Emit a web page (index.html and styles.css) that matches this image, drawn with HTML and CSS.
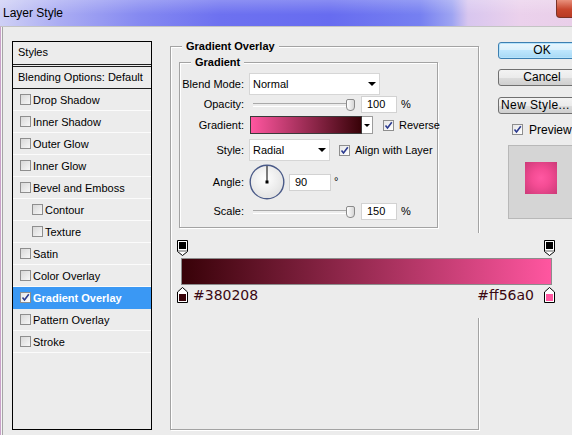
FILE: index.html
```html
<!DOCTYPE html>
<html lang="en">
<head>
    <meta charset="UTF-8">
    <title>Layer Style</title>
    <link rel="stylesheet" href="styles.css">
</head>
<body>
<div class="window">
    <div class="titlebar">
        <span class="title">Layer Style</span>
        <span class="close"></span>
    </div>
    <div class="body">
        <!-- effects list -->
        <div class="styles">
            <div class="styles-head">Styles</div>
            <div class="styles-blend">Blending Options: Default</div>
            <div class="style-row"><span class="check"></span>Drop Shadow</div>
            <div class="style-row"><span class="check"></span>Inner Shadow</div>
            <div class="style-row"><span class="check"></span>Outer Glow</div>
            <div class="style-row"><span class="check"></span>Inner Glow</div>
            <div class="style-row"><span class="check"></span>Bevel and Emboss</div>
            <div class="style-row sub"><span class="check"></span>Contour</div>
            <div class="style-row sub"><span class="check"></span>Texture</div>
            <div class="style-row"><span class="check"></span>Satin</div>
            <div class="style-row"><span class="check"></span>Color Overlay</div>
            <div class="style-row active"><span class="check on"><svg width="9" height="9" viewBox="0 0 9 9"><path d="M1.5 4.5L3.5 7L7.8 1.2" fill="none" stroke="#2b3a8f" stroke-width="1.6"/></svg></span>Gradient Overlay</div>
            <div class="style-row"><span class="check"></span>Pattern Overlay</div>
            <div class="style-row"><span class="check"></span>Stroke</div>
        </div>

        <div class="main">
            <div class="group outer">
                <div class="group-title">Gradient Overlay</div>
                <div class="group inner">
                    <div class="group-title">Gradient</div>

                    <div class="row r-blend">
                        <span class="lbl">Blend Mode:</span>
                        <div class="select wide">Normal<span class="arrow"></span></div>
                    </div>
                    <div class="row r-opacity">
                        <span class="lbl">Opacity:</span>
                        <div class="slider"><span class="thumb"></span></div>
                        <div class="num">100</div>
                        <span class="unit">%</span>
                    </div>
                    <div class="row r-grad">
                        <span class="lbl">Gradient:</span>
                        <div class="swatch"></div>
                        <div class="swatch-btn"><span class="arrow"></span></div>
                        <span class="check on gap"><svg width="9" height="9" viewBox="0 0 9 9"><path d="M1.5 4.5L3.5 7L7.8 1.2" fill="none" stroke="#2b3a8f" stroke-width="1.6"/></svg></span>
                        <span class="opt">Reverse</span>
                    </div>
                    <div class="row r-style">
                        <span class="lbl">Style:</span>
                        <div class="select narrow">Radial<span class="arrow"></span></div>
                        <span class="check on gap2"><svg width="9" height="9" viewBox="0 0 9 9"><path d="M1.5 4.5L3.5 7L7.8 1.2" fill="none" stroke="#2b3a8f" stroke-width="1.6"/></svg></span>
                        <span class="opt">Align with Layer</span>
                    </div>
                    <div class="row r-angle">
                        <span class="lbl">Angle:</span>
                        <svg class="dial" width="36" height="36" viewBox="0 0 36 36">
                            <defs>
                                <radialGradient id="dialFill" cx="45%" cy="40%" r="60%">
                                    <stop offset="0" stop-color="#ffffff"/>
                                    <stop offset="1" stop-color="#e2e2e2"/>
                                </radialGradient>
                            </defs>
                            <circle cx="18" cy="18" r="16.8" fill="url(#dialFill)" stroke="#4a5a88" stroke-width="1.4"/>
                            <line x1="18" y1="18" x2="18" y2="2" stroke="#000" stroke-width="1"/>
                            <rect x="16.5" y="16.5" width="3" height="3" fill="#000"/>
                        </svg>
                        <div class="num angle">90</div>
                        <span class="deg">°</span>
                    </div>
                    <div class="row r-scale">
                        <span class="lbl">Scale:</span>
                        <div class="slider"><span class="thumb"></span></div>
                        <div class="num">150</div>
                        <span class="unit">%</span>
                    </div>
                </div>

                <!-- gradient editor strip -->
                <div class="editor">
                    <div class="stop-row">
                        <svg width="11" height="16" viewBox="0 0 11 16"><path d="M0.5 0.5H10.5V11.5L5.5 15.5L0.5 11.5Z" fill="#fff" stroke="#000"/><rect x="2" y="2" width="7" height="7" fill="#000"/><rect x="1" y="10" width="9" height="2" fill="#b0b0b0"/></svg>
                        <svg width="11" height="16" viewBox="0 0 11 16"><path d="M0.5 0.5H10.5V11.5L5.5 15.5L0.5 11.5Z" fill="#fff" stroke="#000"/><rect x="2" y="2" width="7" height="7" fill="#000"/><rect x="1" y="10" width="9" height="2" fill="#b0b0b0"/></svg>
                    </div>
                    <div class="bar"></div>
                    <div class="stop-row bottom">
                        <svg width="11" height="16" viewBox="0 0 11 16"><path d="M5.5 0.5L10.5 5V15.5H0.5V5Z" fill="#fff" stroke="#000"/><rect x="2" y="7" width="7" height="7" fill="#380208"/></svg>
                        <span class="hex">#380208</span>
                        <span class="hex right">#ff56a0</span>
                        <svg width="11" height="16" viewBox="0 0 11 16"><path d="M5.5 0.5L10.5 5V15.5H0.5V5Z" fill="#fff" stroke="#000"/><rect x="2" y="7" width="7" height="7" fill="#ff56a0"/></svg>
                    </div>
                </div>
            </div>
        </div>

        <div class="side">
            <div class="btn default">OK</div>
            <div class="btn">Cancel</div>
            <div class="btn newstyle">New Style...</div>
            <div class="preview-row">
                <span class="check on"><svg width="9" height="9" viewBox="0 0 9 9"><path d="M1.5 4.5L3.5 7L7.8 1.2" fill="none" stroke="#2b3a8f" stroke-width="1.6"/></svg></span>
                <span class="opt">Preview</span>
            </div>
            <div class="preview">
                <div class="preview-swatch"></div>
            </div>
        </div>
    </div>
</div>
</body>
</html>
```

FILE: styles.css
```css
* {
    box-sizing: border-box;
}

body {
    margin: 0;
    background-color: #ececec;
    font-family: "Liberation Sans", Arial, sans-serif;
    font-size: 11px;
    color: #000;
}

.window {
    width: 572px;
    height: 435px;
    overflow: hidden;
}

.titlebar {
    display: flex;
    align-items: center;
    height: 26px;
    padding-left: 3px;
    font-size: 12px;
    background:
        linear-gradient(to bottom, rgba(255, 255, 255, 0.22), rgba(255, 255, 255, 0) 55%),
        linear-gradient(to right, #cfd0f5 0, #aaacf3 60px, #8589f1 140px, #6d71f0 220px, #676cf0 330px, #7680f1 420px, #9ea4f2 452px, #d8c6ef 468px, #ebd1ec 520px, #e9cfe9 572px);
}

.close {
    align-self: flex-start;
    margin-left: auto;
    margin-right: -16px;
    width: 32px;
    height: 18px;
    border: 1px solid #7a3228;
    border-top: none;
    border-radius: 0 0 0 4px;
    background: linear-gradient(to bottom, #e8907c, #c8462e 55%, #b83a24);
}

.body {
    display: flex;
    align-items: flex-start;
    height: 409px;
    border-top: 1px solid #c4c4c4;
    border-left: 1px solid #c9a1c9;
    padding: 14px 0 0 11px;
    box-shadow: inset 1px 0 0 #f6f6f6, inset 2px 0 0 #a6a6a6;
}

/* effects list */
.styles {
    flex-shrink: 0;
    width: 140px;
    height: 389px;
    border: 1px solid #000;
}

.styles-head {
    height: 25px;
    line-height: 21px;
    padding-left: 5px;
    border-bottom: 3px double #1e1e1e;
}

.styles-blend {
    height: 22px;
    line-height: 20px;
    padding-left: 5px;
    border-bottom: 1px solid #1e1e1e;
}

.style-row {
    display: flex;
    align-items: center;
    height: 22px;
    padding-left: 7px;
    border-bottom: 1px solid #fbfbfb;
}

.style-row.sub {
    padding-left: 19px;
}

.style-row.active {
    background-color: #3a98f4;
    color: #fff;
    font-weight: bold;
    border-bottom-color: #3a98f4;
}

.check {
    display: inline-flex;
    align-items: center;
    justify-content: center;
    flex-shrink: 0;
    width: 11px;
    height: 11px;
    margin-right: 2px;
    border: 1px solid #8e8e8e;
    background: linear-gradient(135deg, #d8d8d8, #f7f7f7);
}

.check.on {
    background: linear-gradient(135deg, #e6e6e6, #ffffff);
}

/* settings groups */
.main {
    margin: 5px 0 0 18px;
}

.group {
    position: relative;
    border: 1px solid #a3a3a3;
    box-shadow: 1px 1px 0 #fff, inset 1px 1px 0 #fff;
}

.outer {
    width: 309px;
    height: 384px;
}

.inner {
    width: 259px;
    height: 166px;
    margin: 15px 0 0 8px;
    padding-top: 10px;
}

.group-title {
    position: absolute;
    top: -7px;
    left: 11px;
    padding: 0 4px;
    line-height: 13px;
    font-weight: bold;
    background-color: #ececec;
}

.row {
    display: flex;
    align-items: center;
    height: 22px;
    white-space: nowrap;
}

.row > * {
    flex-shrink: 0;
}

.r-opacity,
.r-scale {
    height: 18px;
}

.r-grad {
    height: 18px;
    margin-top: 3px;
}

.r-style {
    margin-top: 5px;
}

.r-angle {
    height: 36px;
    margin-top: 3px;
}

.r-scale {
    margin-top: 2px;
}

.lbl {
    width: 64px;
    margin-right: 5px;
    text-align: right;
}

.select {
    display: flex;
    align-items: center;
    justify-content: space-between;
    height: 22px;
    padding: 0 3px 0 3px;
    border: 1px solid #d6d6d6;
    background-color: #fff;
}

.select.wide {
    width: 131px;
}

.select.narrow {
    width: 81px;
}

.arrow {
    width: 0;
    height: 0;
    border-left: 4px solid transparent;
    border-right: 4px solid transparent;
    border-top: 4px solid #000;
}

.slider {
    position: relative;
    width: 102px;
    height: 18px;
    margin-left: 4px;
}

.slider::before {
    content: "";
    position: absolute;
    left: 0;
    right: 4px;
    top: 8px;
    height: 2px;
    border-top: 1px solid #a9a9a9;
    border-bottom: 1px solid #fff;
}

.thumb {
    position: absolute;
    right: 0;
    top: 4px;
    width: 9px;
    height: 12px;
    border: 1px solid #8a8a8a;
    border-radius: 2px 2px 4px 4px;
    background: linear-gradient(to right, #ffffff, #d6d6d6);
}

.num {
    width: 36px;
    height: 17px;
    margin-left: 6px;
    padding-left: 5px;
    line-height: 15px;
    border: 1px solid #d2d2d2;
    background-color: #fff;
}

.num.angle {
    width: 42px;
    margin-left: 4px;
}

.unit {
    margin-left: 4px;
}

.deg {
    align-self: flex-start;
    margin: 11px 0 0 3px;
}

.swatch {
    width: 112px;
    height: 18px;
    margin-left: 1px;
    border: 1px solid #3a3a3a;
    background: linear-gradient(to right, #ff56a0, #380208);
}

.swatch-btn {
    display: flex;
    align-items: center;
    justify-content: center;
    width: 11px;
    height: 18px;
    border: 1px solid #9c9c9c;
    border-left: none;
    background-color: #fff;
}

.swatch-btn .arrow {
    border-left-width: 3px;
    border-right-width: 3px;
    border-top-width: 3px;
}

.check.gap {
    margin-left: 10px;
}

.check.gap2 {
    margin-left: 9px;
}

.opt {
    margin-left: 3px;
}

.dial {
    display: block;
}

/* gradient editor strip */
.editor {
    width: 385px;
    height: 85px;
    margin: 5px 0 0 4px;
    padding: 7px 0 0 2px;
    background-color: #ececec;
}

.stop-row {
    display: flex;
    justify-content: space-between;
    width: 378px;
    height: 16px;
}

.stop-row svg {
    display: block;
}

.bar {
    width: 371px;
    height: 27px;
    margin: 2px 0 0 4px;
    border: 1px solid #8c8c8c;
    background: linear-gradient(to right, #380208, #ff56a0);
}

.stop-row.bottom {
    align-items: center;
    justify-content: flex-start;
    margin-top: 2px;
}

.hex {
    margin-left: 5px;
    font-family: "DejaVu Sans", Verdana, sans-serif;
    font-size: 14px;
    line-height: 16px;
    color: #3a0812;
}

.hex.right {
    margin-left: auto;
    margin-right: 10px;
}

/* buttons column */
.side {
    flex-shrink: 0;
    width: 88px;
    margin: 1px 0 0 19px;
}

.btn {
    height: 17px;
    margin-bottom: 10px;
    line-height: 15px;
    text-align: center;
    font-size: 12px;
    border: 1px solid #707070;
    border-radius: 3px;
    background: linear-gradient(to bottom, #f3f3f3 0, #ebebeb 50%, #dddddd 50%, #cfcfcf 100%);
}

.btn.default {
    border-color: #3c7fb1;
    background: linear-gradient(to bottom, #eaf6fd 0, #d9f0fc 50%, #bee6fd 50%, #a7d9f5 100%);
    box-shadow: inset 0 0 0 1px #b6e3fb;
}

.btn.newstyle {
    margin-top: 11px;
    text-align: left;
    padding-left: 2px;
    letter-spacing: 0.4px;
}

.preview-row {
    display: flex;
    align-items: center;
    height: 11px;
    margin-left: 14px;
}

.preview-row .opt {
    margin-left: 4px;
    font-size: 12px;
}

.preview {
    width: 80px;
    height: 74px;
    margin: 10px 0 0 10px;
    padding: 16px 0 0 16px;
    border: 1px solid #b8b8b8;
    background-color: #d5d5d5;
}

.preview-swatch {
    width: 32px;
    height: 32px;
    background: radial-gradient(circle, #ff58a2 0%, #f44c94 40%, #cc3a78 100%);
}
```
